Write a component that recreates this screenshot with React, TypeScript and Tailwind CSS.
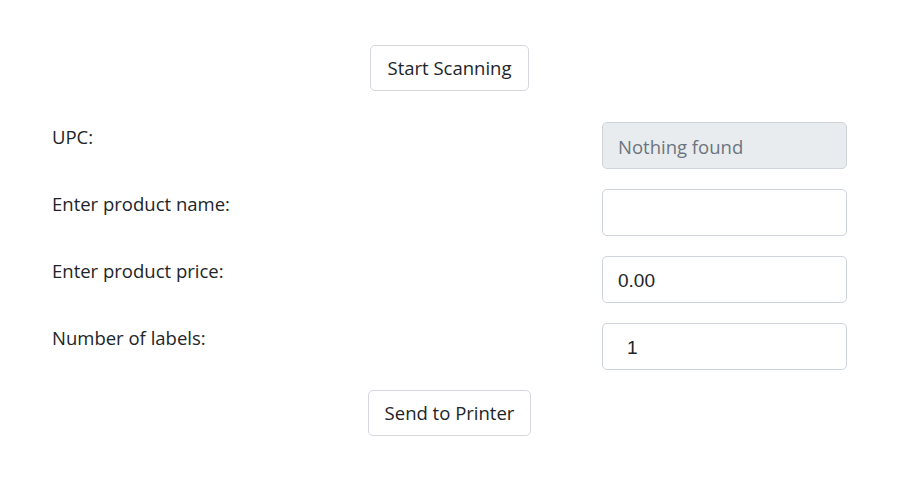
import React from 'react';

const rows = [
  { id: 'upc', label: 'UPC:', value: '', placeholder: 'Nothing found', disabled: true },
  { id: 'name', label: 'Enter product name:', value: '', placeholder: '' },
  { id: 'price', label: 'Enter product price:', value: '0.00', placeholder: '' },
  { id: 'count', label: 'Number of labels:', value: '1', placeholder: '', indent: true },
];

const btn =
  "h-[46px] px-4 rounded-[5px] border border-[#d5d9de] bg-white text-[18.5px] leading-[30px] text-[#212529] font-['Open_Sans',sans-serif]";

export default function App() {
  return (
    <div className="min-h-screen bg-white font-['Open_Sans',sans-serif] text-[#212529]">
      <div className="flex flex-col pt-[45px] pl-[52px] pr-[74px]">
        <div className="flex justify-center mb-[31px]">
          <button className={btn}>Start Scanning</button>
        </div>

        {rows.map((r) => (
          <div key={r.id} className="flex items-start mb-[20px]">
            <label htmlFor={r.id} className="flex-1 text-[18.5px] leading-[30px]">
              {r.label}
            </label>
            <input
              id={r.id}
              defaultValue={r.value}
              placeholder={r.placeholder}
              disabled={r.disabled}
              className={
                'w-[245px] h-[47px] rounded-[5px] border border-[#ced4da] leading-[30px] outline-none placeholder:text-[#6c757d] ' +
                (r.disabled ? 'bg-[#e9ecef] ' : 'bg-white ') +
                (r.indent ? 'pl-[24px] ' : 'pl-[15px] ') +
                (r.value
                  ? "pt-[3px] text-[19px] font-['Liberation_Sans',sans-serif] "
                  : "pt-[2px] text-[18.5px] font-['Open_Sans',sans-serif] ")
              }
            />
          </div>
        ))}

        <div className="flex justify-center">
          <button className={btn}>Send to Printer</button>
        </div>
      </div>
    </div>
  );
}
